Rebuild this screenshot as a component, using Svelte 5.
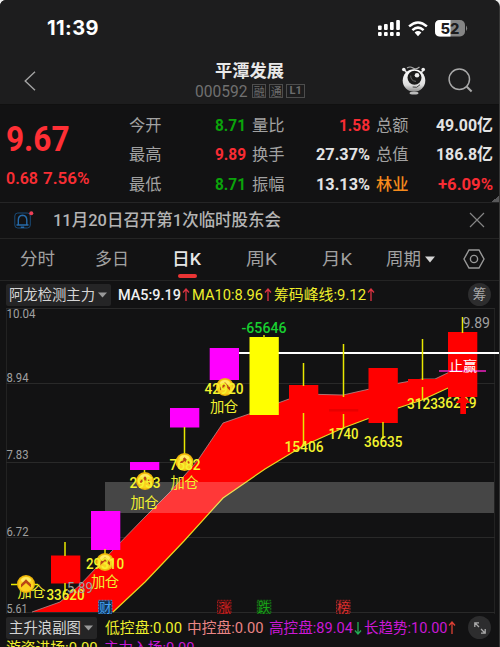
<script>
  const quotes = [
    [['今开', '', 8.71, 'down', 31], ['量比', '', '1.58', 'up', 31], ['总额', '', '49.00亿', 'plain', 57]],
    [['最高', '', '9.89', 'up', 31], ['换手', '', '27.37%', 'plain', 54], ['总值', '', '186.8亿', 'plain', 57]],
    [['最低', '', 8.71, 'down', 31], ['振幅', '', '13.13%', 'plain', 54], ['林业', 'sector', '+6.09%', 'up', 55]]
  ];
  const tabs = [['分时', 35], ['多日', 34], ['日K', 29], ['周K', 31], ['月K', 30]];

  const levels = [[10.04, 309, 318, 29], [8.94, 384, 382, 22], [7.83, 463, 459, 22], [6.72, 538, 536, 22], [5.61, 613, 612.5, 21]];
  const wicks = [
    [65, 542, 556], [65, 583, 594], [105, 549, 560], [144.5, 470, 480], [184.5, 427, 457],
    [264, 335, 338], [303.5, 363, 386], [303.5, 413, 446], [343.5, 344, 397], [343.5, 414, 429],
    [383, 422, 439], [422.5, 339, 380], [422.5, 387, 400], [462.5, 317, 333]
  ];
  const candles = [
    [51, 555.5, 28, '#f00'], [91, 511, 39, '#f0f'], [130, 462, 8, '#f0f'], [170, 408, 19.5, '#f0f'],
    [209.7, 348, 32, '#f0f'], [249.5, 337, 78, '#ff0'], [289, 385, 28, '#f00'], [329, 409, 2.5, '#e80000'],
    [368.5, 368, 55, '#f00'], [408, 379, 8, '#f00'], [448, 332, 65, '#f00']
  ];
  const coins = [[26, 584], [105, 562], [145, 481], [184.5, 462], [225, 387]];
  const counts = [
    ['33620', 46.5, 600, 38], ['29310', 86, 569, 38], ['2953', 129.5, 488, 31], ['7682', 169.5, 469.5, 31],
    ['42920', 204.5, 393.5, 39], ['15406', 284.5, 452, 39], ['1740', 328.5, 438.5, 30],
    ['36635', 364, 446.5, 38.5], ['3123', 407, 409, 31], ['36229', 437.5, 407.5, 39]
  ];
  const adds = [[17.5, 597], [91, 587], [130.5, 507.5], [170.5, 488], [210, 412]];
  const badges = [['财', 98.5, '#48a4f5', '#123456'], ['涨', 217.5, '#d42020', '#311'], ['跌', 257.3, '#18a818', '#132913'], ['榜', 336.5, '#e03030', '#2b1414']];
</script>

{#snippet fit(text, w, size, cls = '')}
  <svg class="fit" width={w} height="20"><text class={cls} x="0" y={10 + size * 0.36} font-size={size} textLength={w} lengthAdjust="spacingAndGlyphs">{text}</text></svg>
{/snippet}

{#snippet arrow(color, down = false)}
  <svg class="arrow" width="8" height="16" viewBox="0 0 8 16" fill="none" stroke={color} stroke-width="1.3">
    <path d={down ? 'M4 2V14M1 10.5 4 14 7 10.5' : 'M4 14V2M1 5.5 4 2 7 5.5'} />
  </svg>
{/snippet}

<div class="corners">
<main class="app">
  <div class="top">
    <div class="status">
      <span class="time">11:39</span>
      <div class="signals">
        <svg class="bars" width="24" height="17" viewBox="0 0 24 17" fill="#fff">
          <rect x="1" y="5.5" width="3.7" height="4.5" rx="1" /><rect x="7" y="4" width="3.7" height="6" rx="1" />
          <rect x="13" y="2" width="3.7" height="8" rx="1" /><rect x="19.2" y="0" width="3.7" height="10" rx="1" />
          <rect x="1" y="12" width="3.7" height="4" rx="1" /><rect x="7" y="12" width="3.7" height="4" rx="1" />
          <rect x="13" y="12" width="3.7" height="4" rx="1" /><rect x="19.2" y="12" width="3.7" height="4" rx="1" />
        </svg>
        <svg class="wifi" width="20" height="16" viewBox="0 0 20 16" fill="none" stroke="#fff" stroke-width="2.5">
          <path d="M1.1 5.4Q10-2.4 18.9 5.4M4.4 9.1Q10 4.2 15.6 9.1" /><path d="M6.6 11.5Q10 8.7 13.4 11.5L10 15.2Z" fill="#fff" stroke="none" />
        </svg>
        <svg class="battery" width="33" height="17" viewBox="0 0 33 17">
          <rect width="30" height="16.5" rx="5" fill="#858585" /><path d="M5 0H15.5V16.5H5Q0 16.5 0 11.5V5Q0 0 5 0" fill="#fff" />
          <path d="M31 5.5Q33.2 8.2 31 11Z" fill="#858585" />
          <text x="5.4" y="13.5" font-size="14.5" font-weight="800" textLength="19" lengthAdjust="spacingAndGlyphs" fill="#1d1d1e">52</text>
        </svg>
      </div>
    </div>
    <header>
      <svg class="back" width="12" height="20" viewBox="0 0 12 20" fill="none" stroke="#a3a3a3" stroke-width="1.4"><path d="M11 .8 1.2 10 11 19.2" /></svg>
      <div class="title">
        {@render fit('平潭发展', 69, 17.3, 'name')}
        <div class="code">
          {@render fit('000592', 52.5, 16, 'num')}
          <span>融</span><span>通</span><span class="l1">L1</span>
        </div>
      </div>
      <div class="tools">
        <svg width="26" height="30" viewBox="0 0 26 30">
          <defs><linearGradient id="ball" x2="0" y2="1"><stop stop-color="#fff" /><stop offset=".7" stop-color="#ddd" /><stop offset="1" stop-color="#888" /></linearGradient></defs>
          <path d="M3 3.5 7 8M23 3.5 19 8" stroke="#ddd" stroke-width="1.8" />
          <circle cx="2.8" cy="3.5" r="1.8" fill="#eee" /><circle cx="22.2" cy="3.5" r="1.8" fill="#eee" />
          <path d="M6 2Q9 0 12 2T18.5 1" fill="none" stroke="#aaa" stroke-width="1.1" />
          <ellipse cx="13" cy="27" rx="4.5" ry="1.6" fill="#bbb" />
          <circle cx="13" cy="14.5" r="11.3" fill="url(#ball)" />
          <circle cx="13.5" cy="11.7" r="7" fill="#1b1b1b" /><circle cx="16" cy="9.3" r="2.3" fill="#eee" />
          <path d="M9.7 9.5Q9.6 15 15 15.4" fill="none" stroke="#666" />
          <path d="M11.7 21Q16 22.7 19 18.7" fill="none" stroke="#444" />
        </svg>
        <svg width="25" height="25" viewBox="0 0 25 25" fill="none" stroke="#a8a8a8" stroke-width="1.5"><circle cx="11.3" cy="11.3" r="10.2" /><path d="M18.6 18.6 23.6 23.4" stroke-width="2.1" /></svg>
      </div>
    </header>
  </div>

  <section class="quote">
    <div class="price">
      {@render fit('9.67', 63.5, 35.5, 'big')}
      <div class="change">{@render fit('0.68', 32, 17, 'semi')}{@render fit('7.56%', 46.5, 17, 'semi')}</div>
    </div>
    <div class="stats">
      {#each quotes as row}
        {#each row as [label, kind, value, tone, w]}
          <div class="stat">{@render fit(label, 32.5, 16.3, kind || 'label')}{@render fit(value, w, 16.7, tone + ' bold')}</div>
        {/each}
      {/each}
    </div>
    <i class="fold"></i>
  </section>

  <section class="notice">
    <svg width="20" height="20" viewBox="0 0 20 20" fill="none" stroke="#266bab">
      <rect x=".8" y="3" width="15.5" height="15" rx="3" stroke="#194b79" />
      <path d="M2.5 15H14.5M4.3 14.7V10.3Q4.3 5.5 8.5 5.3Q12.8 5.5 12.8 10.3V14.7M6.8 17.2H10.2" stroke-width="1.4" />
      <circle cx="17.3" cy="3.3" r="2" fill="#ed4057" stroke="none" />
    </svg>
    {@render fit('11月20日召开第1次临时股东会', 228, 16.5, 'news')}
    <svg class="close" width="16" height="16" viewBox="0 0 16 16" stroke="#858585" stroke-width="1.2"><path d="M1 1 15 15M15 1 1 15" /></svg>
  </section>

  <nav>
    {#each tabs as [name, w], i}
      <div class="tab" class:active={i === 2}>{@render fit(name, w, 17.3, i === 2 ? 'on' : 'off')}</div>
    {/each}
    <div class="period">{@render fit('周期', 35, 17.3, 'off')}<svg width="10" height="7"><path d="M0 .5H10L5 6.5Z" fill="#d5d5d5" /></svg></div>
    <svg class="hex" width="22" height="20" viewBox="0 0 22 20" fill="none" stroke="#999" stroke-width="1.4"><path d="M6 1H16L21 10 16 19H6L1 10Z" /><circle cx="11" cy="10" r="3.6" /></svg>
  </nav>

  <section class="indicators">
    <div class="picker first">{@render fit('阿龙检测主力', 86, 14.6, 'pick')}<svg width="9" height="6"><path d="M0 .5H9L4.5 5.5Z" fill="#999" /></svg></div>
    {@render fit('MA5:9.19', 63, 14.8, 'white')}{@render arrow('#dc3342')}
    <div class="gap"></div>
    {@render fit('MA10:8.96', 71, 14.8, 'yellow')}{@render arrow('#dc3342')}
    <div class="gap"></div>
    {@render fit('筹码峰线:9.12', 92, 14.8, 'yellow')}{@render arrow('#dc3342')}
    <div class="round">筹</div>
  </section>

  <svg class="chart" width="500" height="306" viewBox="0 308 500 306">
    <g stroke="#292929" stroke-width="1">
      <path d="M6.5 309V614M494.5 309V614" stroke="#222" />
      {#each levels as [, y]}<path d="M6 {y - 0.5}H495" />{/each}
    </g>
    <path fill="#f00" d="M32 612 46 607 60 602 80 585 113 550 145 517 170 492 198 460 223 423 249 414 278 403 303 394 343 395 383 386 422 379 435 379 462 366 462 382 448 388 422 400 383 413 343 428 303 446 265 469 223 498 184 541 145 582 113 612Z" />
    <path fill="none" stroke="#b98c8c" stroke-width=".8" d="M32 612 46 607 60 602 80 585 113 550 145 517 170 492 198 460 223 423 249 414 278 403 303 394 343 395 383 386 422 379 435 379 462 366" />
    <path fill="none" stroke="#e9d820" stroke-width="1.2" d="M448 388 422 400 383 413 343 428 303 446 265 469 223 498 184 541 145 582 113 612" />
    <rect x="105" y="482" width="389" height="31" fill="#fff" opacity=".22" />

    {#each levels as [v, , y, w]}<text class="axis" x="6.5" {y} font-size="12.5" textLength={w} lengthAdjust="spacingAndGlyphs">{v}</text>{/each}
    <path d="M239 353H500" stroke="#fff" stroke-width="2.2" />
    {#each candles as [x, y, h, fill]}<rect {x} {y} width="29.3" height={h} {fill} />{/each}
    <path d="M278.8 353H500" stroke="#fff" stroke-width="2.2" />
    <path d="M439 371H486" stroke="#f020c0" stroke-width="1.5" />
    {#each wicks as [x, a, b]}<path d="M{x} {a}V{b}" stroke="#e8e800" stroke-width="1.5" />{/each}
    <path d="M11 584.5H38" stroke="#e8e800" stroke-width="1.5" />

    {#each adds as [x, y]}<text class="add" {x} {y} font-size="14.3" textLength="28">加仓</text>{/each}
    {#each coins as [x, y]}
      <g transform="translate({x} {y})">
        <circle r="9" fill="#eeb60a" /><circle r="7.6" fill="#fbd020" /><ellipse cy="-4" rx="5" ry="3" fill="#ffec60" />
        <path d="M-5 3.5 0-1 5 3.5V.2L0-4.8-5 .2Z" fill="#b94616" />
      </g>
    {/each}
    {#each counts as [n, x, y, w]}<text class="count" {x} {y} font-size="15.3" textLength={w} lengthAdjust="spacingAndGlyphs">{n}</text>{/each}
    <text class="axis" x="67" y="593" font-size="15" textLength="26" lengthAdjust="spacingAndGlyphs">5.89</text>
    <text class="count fall" x="241.5" y="333" font-size="15.3" textLength="45" lengthAdjust="spacingAndGlyphs">-65646</text>
    <text class="axis" x="462.5" y="328" font-size="15" textLength="27.5" lengthAdjust="spacingAndGlyphs">9.89</text>
    <text class="stop" x="449" y="370.5" font-size="14" textLength="28">止赢</text>
    <path d="M463 395 470.5 403H466V414H460.3V403H455.5Z" fill="#f00" />

    {#each badges as [c, x, color, bg]}
      <rect {x} y="600.3" width="13.5" height="13.5" fill={bg} stroke={color} stroke-width=".7" stroke-dasharray="2 1" />
      <text x={x + 0.5} y="611.8" font-size="12.7" fill={color}>{c}</text>
    {/each}
  </svg>

  <section class="indicators sub">
    <div class="picker second">{@render fit('主升浪副图', 72, 14.5, 'pick')}<svg width="9" height="6"><path d="M0 .5H9L4.5 5.5Z" fill="#999" /></svg></div>
    {@render fit('低控盘:0.00', 77, 14.6, 'yellow')}<div class="gap wide"></div>
    {@render fit('中控盘:0.00', 76.5, 14.6, 'salmon')}<div class="gap wide"></div>
    {@render fit('高控盘:89.04', 84, 14.6, 'magenta')}{@render arrow('#24ad54', true)}<div class="gap"></div>
    {@render fit('长趋势:10.00', 83.5, 14.6, 'magenta')}{@render arrow('#dc4034')}
    <div class="round"><svg width="12" height="12" viewBox="0 0 12 12" fill="none" stroke="#aaa" stroke-width="1.3"><path d="M5 .8H.8V5M.8.8 5 5M7 11.2H11.2V7M11.2 11.2 7 7" /></svg></div>
  </section>
  <section class="flows">
    {@render fit('游资进场:0.00', 91.5, 14.6, 'yellow')}
    {@render fit('主力入场:0.00', 90.5, 14.6, 'magenta')}
  </section>
</main>
</div>

<style>
  .corners { width: 500px; height: 647px; overflow: hidden; background: #eee; }
  .app { box-sizing: border-box; width: 500px; height: 647px; overflow: hidden; background: #121213; border-radius: 6px 7px 0 0; border-right: 1px solid #363636; font-family: Roboto, "Noto Sans CJK SC", sans-serif; }
  svg { display: block; flex: none; }
  svg text { font-family: Roboto, "Noto Sans CJK SC", sans-serif; }
  .fit { overflow: visible; }
  .top { height: 105px; background: #1d1d1e; border-bottom: 1px solid #101010; box-sizing: border-box; }
  .status { height: 57px; display: flex; justify-content: space-between; padding: 0 31px 0 47px; }
  .time { font: 700 20px/57px Inter, sans-serif; letter-spacing: .4px; color: #fff; }
  .signals { display: flex; align-items: center; height: 57px; }
  .wifi { margin-left: 7px; }
  .battery { margin-left: 7px; }
  .battery text { font-family: Inter, sans-serif; }
  header { display: grid; grid-template-columns: 150px 200px 1fr; height: 47px; }
  .back { margin: 14px 0 0 24px; }
  .title { display: flex; flex-direction: column; align-items: center; padding-top: 4px; padding-right: 2px; }
  .code { display: flex; align-items: center; gap: 2px; height: 20px; padding-left: 2px; }
  .code span { margin-left: 1px; box-sizing: border-box; width: 14px; height: 14px; border: 1px solid #4d4d4d; color: #6c6c6c; font: 11px/12px "Noto Sans CJK SC", sans-serif; display: flex; justify-content: center; }
  .code span.l1 { width: 19px; font: 700 11px/12px Roboto, sans-serif; }
  .code .fit { margin-right: 2px; }
  .tools { display: flex; align-items: flex-start; padding: 9px 0 0 51px; gap: 21px; }
  .tools svg:last-child { margin-top: 2px; }
  .name { fill: #e8e8e8; font-weight: 700; }
  .num { fill: #707070; }
  .quote { height: 98px; display: flex; position: relative; border-bottom: 1px solid #252526; box-sizing: border-box; }
  .price { width: 129px; padding: 23px 0 0 5.5px; box-sizing: border-box; }
  .change { display: flex; gap: 5px; margin-top: 20px; }
  .big { fill: #ff2f35; font-weight: 700; }
  .semi { fill: #f92e34; font-weight: 600; }
  .stats { display: grid; grid-template-columns: 117px 118px 116.5px; grid-auto-rows: 29.6px; column-gap: 6px; padding-top: 5px; }
  .stat { display: flex; justify-content: space-between; align-items: center; }
  .label { fill: #a2a2a2; }
  .sector { fill: #f58a1c; font-weight: 500; }
  .bold { font-weight: 700; }
  .up { fill: #f92c34; }
  .down { fill: #0ba30b; }
  .plain { fill: #e3e3e3; }
  .fold { position: absolute; right: 0; bottom: 0; width: 7px; height: 7px; background: linear-gradient(135deg, transparent 50%, #58585a 50%); }
  .notice { height: 36px; display: flex; align-items: center; padding: 0 14px 1px 14px; border-bottom: 1px solid #242424; box-sizing: border-box; }
  .notice .fit { margin-left: 19px; }
  .close { margin-left: auto; }
  .news { fill: #b4b4b4; font-weight: 500; }
  nav { height: 42px; display: flex; border-bottom: 1px solid #242424; align-items: flex-start; box-sizing: border-box; }
  .tab { width: 74.8px; height: 40px; display: flex; justify-content: center; padding-top: 10px; box-sizing: border-box; position: relative; }
  .active::after { content: ''; position: absolute; left: 28px; top: 35px; width: 19px; height: 4px; border-radius: 2px; background: #ea3434; }
  .off { fill: #a1a1a1; }
  .on { fill: #e7e7e7; font-weight: 500; }
  .period { display: flex; gap: 4px; margin-left: 12px; padding-top: 10px; align-items: center; }
  .hex { margin: 10px 0 0 28px; }
  .indicators { height: 27px; padding-left: 6px; display: flex; align-items: center; box-sizing: border-box; }
  .picker { height: 22px; background: #252526; display: flex; align-items: center; padding-left: 3px; gap: 3px; box-sizing: border-box; border-radius: 2px; }
  .first { width: 105px; margin-right: 7px; }
  .second { width: 91px; margin-right: 8px; }
  .pick { fill: #d5d5d5; }
  .arrow { margin-left: 1px; }
  .gap { width: 2px; }
  .gap.wide { width: 5px; }
  .white { fill: #efefef; font-weight: 500; }
  .yellow { fill: #efef2c; font-weight: 400; }
  .salmon { fill: #ea8585; font-weight: 400; }
  .magenta { fill: #ca18d6; font-weight: 400; }
  .round { width: 23px; height: 23px; border-radius: 50%; background: #2d2d2e; color: #aaa; font-size: 13.5px; line-height: 21px; display: flex; align-items: center; justify-content: center; margin-left: auto; margin-right: 8px; }
  .axis { fill: #a0a0a0; }
  .count { fill: #f4f42e; font-weight: 500; }
  .count.fall { fill: #18cf30; }
  .add { fill: #f0f030; }
  .stop { fill: #fff; }
  .flows { height: 20px; display: flex; gap: 6px; padding-left: 6px; margin-top: -3px; }
</style>
